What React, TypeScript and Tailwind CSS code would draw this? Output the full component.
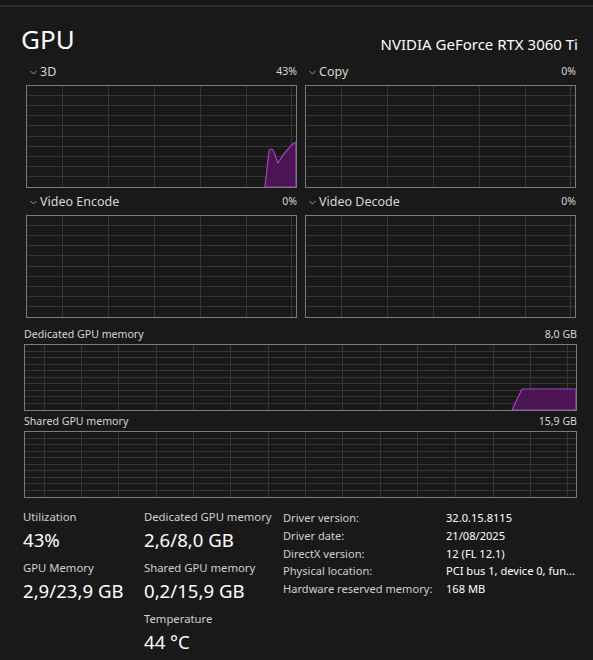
import React from "react";

type GraphProps = {
  width: number;
  height: number;
  vlines: number[];
  rows: number;
  path?: string;
};

function Graph({ width, height, vlines, rows, path }: GraphProps) {
  const iw = width - 2;
  const ih = height - 2;
  const hlines = Array.from({ length: rows - 1 }, (_, i) => Math.round(((i + 1) * ih) / rows) - 0.5);

  return (
    <div className="border border-[#7b7b7b] box-border" style={{ width, height }}>
      <svg width={iw} height={ih} viewBox={`0 0 ${iw} ${ih}`} className="block">
        {hlines.map((y) => (
          <line key={"h" + y} x1={0} x2={iw} y1={y} y2={y} stroke="#363636" strokeWidth={1} shapeRendering="crispEdges" />
        ))}
        {vlines.map((x) => (
          <line key={"v" + x} x1={x + 0.5} x2={x + 0.5} y1={0} y2={ih} stroke="#363636" strokeWidth={1} shapeRendering="crispEdges" />
        ))}
        {path && <path d={path} fill="#4a1552" stroke="#a742c2" strokeWidth={1.2} strokeLinejoin="round" />}
      </svg>
    </div>
  );
}

function Chevron() {
  return (
    <svg width="7" height="5" viewBox="0 0 7 5" className="mr-[3px]">
      <polyline points="0.5,1 3.5,4 6.5,1" fill="none" stroke="#9a9a9a" strokeWidth="1" />
    </svg>
  );
}

function SmallGraph({ label, value, path }: { label: string; value: string; path?: string }) {
  return (
    <div className="w-[271px]">
      <div className="flex items-center justify-between h-[18px] mb-[4px]">
        <div className="flex items-center pl-[4px]">
          <Chevron />
          <span className="text-[12.5px] text-[#d6d6d6]">{label}</span>
        </div>
        <span className="text-[10.5px] text-[#d6d6d6]">{value}</span>
      </div>
      <Graph width={271} height={103} vlines={[35, 81, 127, 173, 219, 264]} rows={10} path={path} />
    </div>
  );
}

function MemGraph({ label, value, path }: { label: string; value: string; path?: string }) {
  return (
    <div className="w-[553px]">
      <div className="flex items-center justify-between h-[16px] mb-[1px]">
        <span className="text-[10.6px] text-[#d6d6d6]">{label}</span>
        <span className="text-[10.6px] text-[#d6d6d6]">{value}</span>
      </div>
      <Graph
        width={553}
        height={67}
        vlines={[19, 56, 93, 131, 168, 205, 243, 280, 317, 355, 392, 430, 468, 505, 542]}
        rows={10}
        path={path}
      />
    </div>
  );
}

function Stat({ label, value }: { label: string; value: string }) {
  return (
    <div className="mb-[8px]">
      <div className="text-[11.3px] leading-[16px] text-[#d0d0d0]">{label}</div>
      <div className="text-[18.6px] leading-[24px] mt-[3px] text-white">{value}</div>
    </div>
  );
}

const details: [string, string][] = [
  ["Driver version:", "32.0.15.8115"],
  ["Driver date:", "21/08/2025"],
  ["DirectX version:", "12 (FL 12.1)"],
  ["Physical location:", "PCI bus 1, device 0, fun..."],
  ["Hardware reserved memory:", "168 MB"],
];

export default function App() {
  return (
    <div
      className="w-[593px] h-[660px] bg-[#191919] overflow-hidden"
      style={{ fontFamily: '"Segoe UI", "Noto Sans", sans-serif' }}
    >
      <div className="h-[5px]" />
      <div className="h-[2px] bg-[#2a2a32]" />

      {/* Header */}
      <div className="flex items-end justify-between pl-[21px] pr-[15px] mt-[16px]">
        <h1 className="text-[26px] leading-[32px] text-white">GPU</h1>
        <span className="text-[15px] leading-[22px] text-white">NVIDIA GeForce RTX 3060 Ti</span>
      </div>

      {/* Engine graphs */}
      <div className="grid grid-cols-[271px_271px] gap-x-[8px] gap-y-[5px] pl-[26px] mt-[8px]">
        <SmallGraph
          label="3D"
          value="43%"
          path="M238 101 L242 65 Q244 61 246.5 65 L251 77 Q256 68 262 62 Q266 57 269 56 L269 101 Z"
        />
        <SmallGraph label="Copy" value="0%" />
        <SmallGraph label="Video Encode" value="0%" />
        <SmallGraph label="Video Decode" value="0%" />
      </div>

      {/* Memory graphs */}
      <div className="pl-[24px] mt-[9px] flex flex-col gap-[3px]">
        <MemGraph label="Dedicated GPU memory" value="8,0 GB" path="M487 65 L497 44 L551 44 L551 65 Z" />
        <MemGraph label="Shared GPU memory" value="15,9 GB" />
      </div>

      {/* Stats */}
      <div className="flex pl-[23px] mt-[11px]">
        <div className="w-[121px]">
          <Stat label="Utilization" value="43%" />
          <Stat label="GPU Memory" value="2,9/23,9 GB" />
        </div>
        <div className="w-[139px]">
          <Stat label="Dedicated GPU memory" value="2,6/8,0 GB" />
          <Stat label="Shared GPU memory" value="0,2/15,9 GB" />
          <div className="mt-[2px]">
            <Stat label="Temperature" value="44 °C" />
          </div>
        </div>
        <div className="text-[11.1px] leading-[17.8px]">
          {details.map(([k, v]) => (
            <div key={k} className="flex">
              <span className="w-[163px] text-[#d0d0d0]">{k}</span>
              <span className="text-white">{v}</span>
            </div>
          ))}
        </div>
      </div>
    </div>
  );
}
